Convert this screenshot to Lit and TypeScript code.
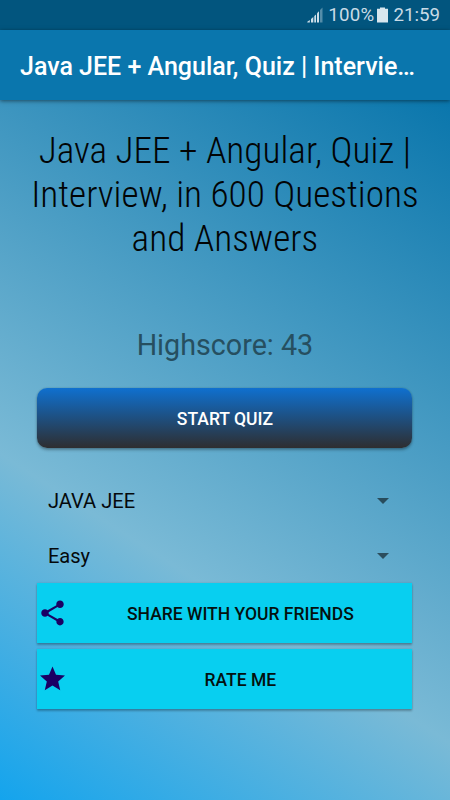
import { LitElement, html, css, svg } from "lit";
import { customElement, property } from "lit/decorators.js";

@customElement("status-bar")
class StatusBar extends LitElement {
  static styles = css`
    :host {
      display: flex;
      align-items: center;
      justify-content: flex-end;
      box-sizing: border-box;
      height: 30px;
      padding-right: 10px;
      background: #02557e;
      color: #c9dbe6;
      font-size: 18.7px;
    }
    .signal { width: 16px; height: 16px; margin-right: 5px; }
    .battery { width: 11px; height: 16px; margin: 0 5px 0 3px; }
    .label { line-height: 30px; }
    .charge { letter-spacing: 0.25px; }
  `;
  render() {
    return html`
      <svg class="signal" viewBox="0 0 16 16" fill="#cfe0ea">
        <path d="M0.3 15.5V14.7L2.8 13V15.5z" />
        <path d="M4 15.5V12L6.3 10V15.5z" />
        <path d="M7.3 15.5V9L9 7.5V15.5z" />
        <path d="M10 15.5V6.2L12 4.2V15.5z" />
        <path d="M13 15.5V3L15.5 0.5V15.5z" opacity="0.4" />
      </svg>
      <span class="label charge">100%</span>
      <svg class="battery" viewBox="0 0 11 16" fill="#d8e6ee">
        <path d="M3 0.5h5v1.3h3V15.5H0V1.8h3z" />
      </svg>
      <span class="label">21:59</span>
    `;
  }
}

@customElement("quiz-select")
class QuizSelect extends LitElement {
  @property() value = "";
  static styles = css`
    :host {
      display: flex;
      align-items: center;
      justify-content: space-between;
      box-sizing: border-box;
      height: 55px;
      padding: 0 23.5px 0 10.5px;
      font-size: 20.1px;
      color: #05090b;
    }
    .arrow { width: 12px; height: 6px; }
  `;
  render() {
    return html`
      <span>${this.value}</span>
      <svg class="arrow" viewBox="0 0 12 6"><path d="M0 0h12L6 6z" fill="#000" opacity="0.54" /></svg>
    `;
  }
}

const icons = {
  share: svg`<path d="M18 16.08c-.76 0-1.44.3-1.96.77L8.91 12.7c.05-.23.09-.46.09-.7s-.04-.47-.09-.7l7.05-4.11c.54.5 1.25.81 2.04.81 1.66 0 3-1.34 3-3s-1.34-3-3-3-3 1.34-3 3c0 .24.04.47.09.7L8.04 9.81C7.5 9.31 6.79 9 6 9c-1.66 0-3 1.34-3 3s1.34 3 3 3c.79 0 1.5-.31 2.04-.81l7.12 4.16c-.05.21-.08.43-.08.65 0 1.61 1.31 2.92 2.92 2.92s2.92-1.31 2.92-2.92-1.31-2.92-2.92-2.92z" />`,
  star: svg`<path d="M12 17.27L18.18 21l-1.64-7.03L22 9.24l-7.19-.61L12 2 9.19 8.63 2 9.24l5.46 4.73L5.82 21z" />`,
};

@customElement("icon-button")
class IconButton extends LitElement {
  @property() icon: "share" | "star" = "share";
  static styles = css`
    :host { display: block; }
    .button {
      display: flex;
      align-items: center;
      width: 100%;
      height: 59.7px;
      padding: 0;
      border: 0;
      background: #08cff0;
      color: #04110f;
      font: 500 17.5px Roboto, sans-serif;
      box-shadow: 0 2px 2px rgba(0, 0, 0, 0.26), 0 0 2px rgba(0, 0, 0, 0.14);
    }
    .icon { flex: none; width: 31px; height: 30px; fill: #1b0064; }
    .label { flex: 1; text-align: center; padding-top: 2px; }
  `;
  render() {
    return html`
      <button class="button">
        <svg class="icon" viewBox="0 0 24 24">${icons[this.icon]}</svg>
        <span class="label"><slot></slot></span>
      </button>
    `;
  }
}

@customElement("app-root")
class AppRoot extends LitElement {
  static styles = css`
    :host {
      display: flex;
      flex-direction: column;
      width: 450px;
      height: 800px;
      overflow: hidden;
      font-family: Roboto, sans-serif;
    }
    .toolbar {
      flex: none;
      z-index: 1;
      box-sizing: border-box;
      height: 70px;
      padding: 2px 20px 0;
      background: #0a76ad;
      color: #fff;
      font-size: 25px;
      font-weight: 500;
      line-height: 70px;
      white-space: nowrap;
      box-shadow: 0 1px 4px rgba(0, 0, 0, 0.5);
    }
    .content {
      flex: 1;
      display: flex;
      flex-direction: column;
      padding: 28px 37.6px 0 37.4px;
      background: linear-gradient(32.735deg, #14a4ed 0%, #7abad6 35%, #0a76ac 100%);
    }
    .title {
      margin: 0 -20px;
      color: #020405;
      font-family: "Roboto Condensed", Roboto, sans-serif;
      font-stretch: 75%;
      font-size: 37.3px;
      font-weight: 300;
      line-height: 44px;
      text-align: center;
    }
    .score {
      margin-top: 67px;
      color: #264f60;
      font-size: 28.7px;
      line-height: 36px;
      text-align: center;
    }
    .start {
      flex: none;
      height: 60px;
      margin: 25px 0;
      padding: 2px 0 0;
      border: 0;
      border-radius: 10px;
      background: linear-gradient(#0f70cf, #2e2e30);
      color: #fff;
      font: 500 17.5px Roboto, sans-serif;
      box-shadow: 0 2px 3px rgba(0, 0, 0, 0.3), 0 0 2px rgba(0, 0, 0, 0.2);
    }
    .actions { display: grid; gap: 6.5px; padding-top: 0.3px; }
  `;
  render() {
    return html`
      <status-bar></status-bar>
      <div class="toolbar">Java JEE + Angular, Quiz | Intervie…</div>
      <div class="content">
        <div class="title">Java JEE + Angular, Quiz |<br />Interview, in 600 Questions<br />and Answers</div>
        <div class="score">Highscore: 43</div>
        <button class="start">START QUIZ</button>
        <quiz-select value="JAVA JEE"></quiz-select>
        <quiz-select value="Easy"></quiz-select>
        <div class="actions">
          <icon-button icon="share">SHARE WITH YOUR FRIENDS</icon-button>
          <icon-button icon="star">RATE ME</icon-button>
        </div>
      </div>
    `;
  }
}
